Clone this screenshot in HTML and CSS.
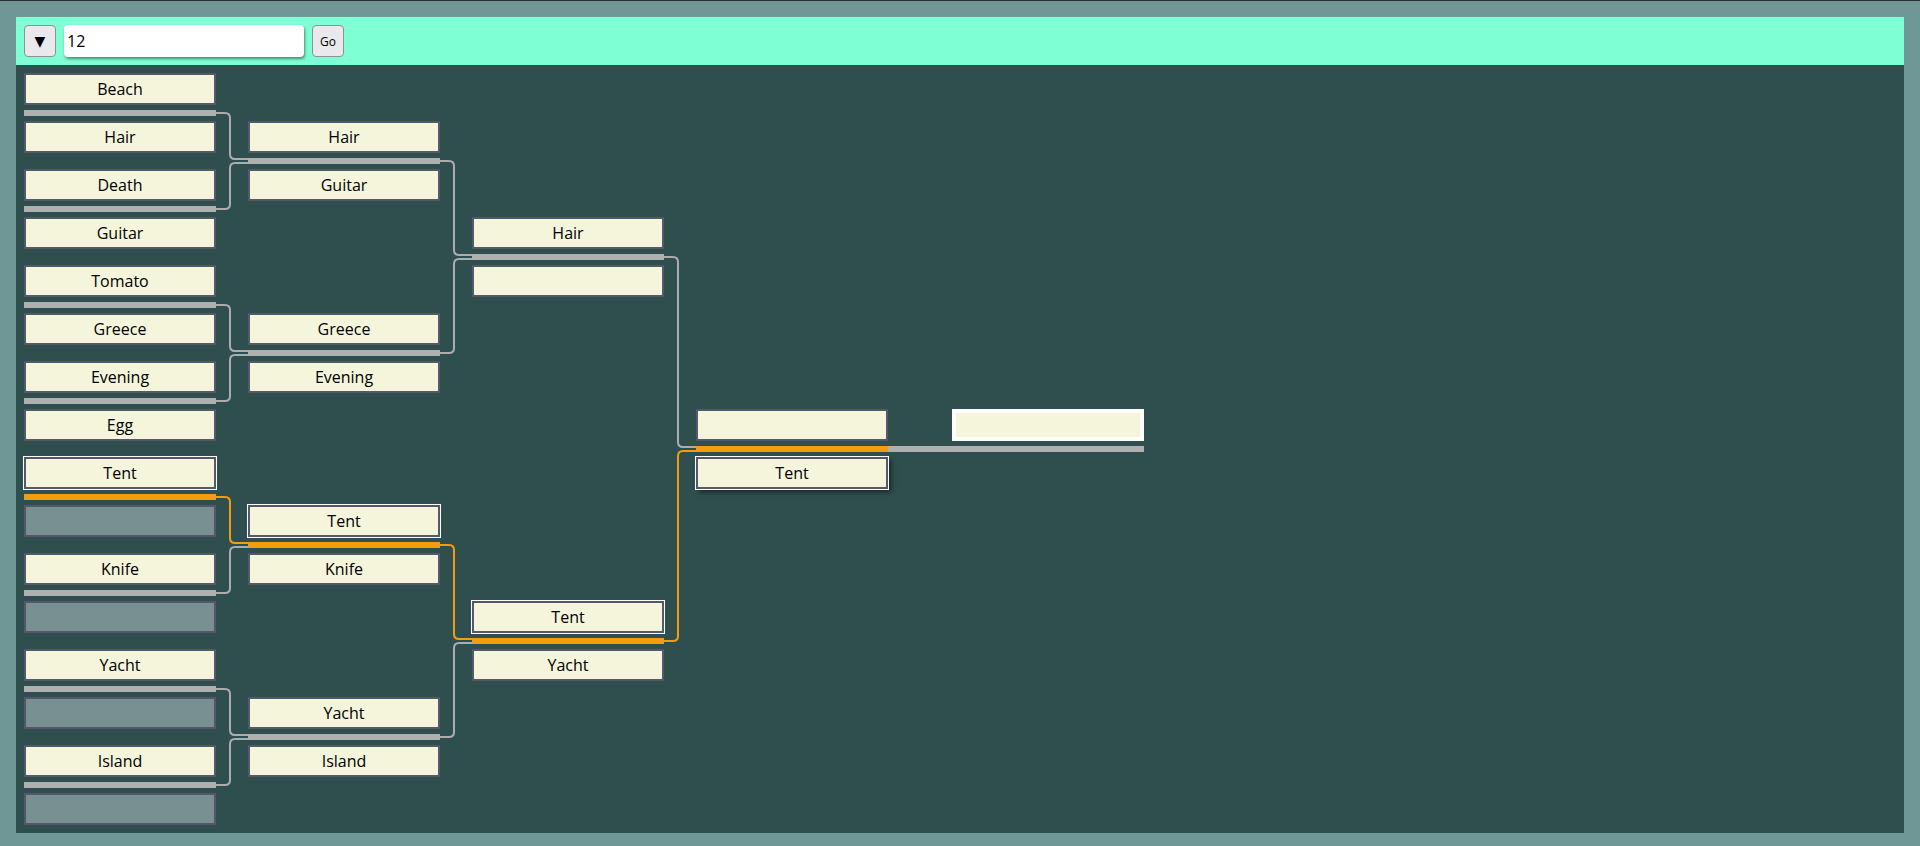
FILE: index.html
```html
<!DOCTYPE html>
<html>
<head>
<meta charset="utf-8">
<link rel="stylesheet" href="styles.css">
</head>
<body>
<div class="app">
  <div class="toolbar">
    <button class="btn dd">▼</button>
    <input class="count" type="text" value="12">
    <button class="btn go">Go</button>
  </div>
  <div class="bracket">
    <div class="col c1">
      <div class="match"><div class="slot">Beach</div><div class="bar"></div><div class="slot">Hair</div></div>
      <div class="match"><div class="slot">Death</div><div class="bar"></div><div class="slot">Guitar</div></div>
      <div class="match"><div class="slot">Tomato</div><div class="bar"></div><div class="slot">Greece</div></div>
      <div class="match"><div class="slot">Evening</div><div class="bar"></div><div class="slot">Egg</div></div>
      <div class="match"><div class="slot hl">Tent</div><div class="bar win"></div><div class="slot bye"></div></div>
      <div class="match"><div class="slot">Knife</div><div class="bar"></div><div class="slot bye"></div></div>
      <div class="match"><div class="slot">Yacht</div><div class="bar"></div><div class="slot bye"></div></div>
      <div class="match"><div class="slot">Island</div><div class="bar"></div><div class="slot bye"></div></div>
    </div>
    <div class="col c2">
      <div class="match"><div class="slot">Hair</div><div class="bar"></div><div class="slot">Guitar</div></div>
      <div class="match"><div class="slot">Greece</div><div class="bar"></div><div class="slot">Evening</div></div>
      <div class="match"><div class="slot hl">Tent</div><div class="bar win"></div><div class="slot">Knife</div></div>
      <div class="match"><div class="slot">Yacht</div><div class="bar"></div><div class="slot">Island</div></div>
    </div>
    <div class="col c3">
      <div class="match"><div class="slot">Hair</div><div class="bar"></div><div class="slot"></div></div>
      <div class="match"><div class="slot hl">Tent</div><div class="bar win"></div><div class="slot">Yacht</div></div>
    </div>
    <div class="col c4">
      <div class="match"><div class="slot"></div><div class="bar final"></div><div class="slot hl hover">Tent</div></div>
    </div>
    <div class="col c5">
      <div class="champion"></div>
    </div>
    <svg class="links" width="1888" height="768" viewBox="0 0 1888 768">
      <g fill="none" stroke="#adadad" stroke-width="2">
        <path d="M200 48 H209 Q214 48 214 53 V89 Q214 94 219 94 H232"/>
        <path d="M200 144 H209 Q214 144 214 139 V103 Q214 98 219 98 H232"/>
        <path d="M200 240 H209 Q214 240 214 245 V281 Q214 286 219 286 H232"/>
        <path d="M200 336 H209 Q214 336 214 331 V295 Q214 290 219 290 H232"/>
        <path d="M200 528 H209 Q214 528 214 523 V487 Q214 482 219 482 H232"/>
        <path d="M200 624 H209 Q214 624 214 629 V665 Q214 670 219 670 H232"/>
        <path d="M200 720 H209 Q214 720 214 715 V679 Q214 674 219 674 H232"/>
        <path d="M424 96 H433 Q438 96 438 101 V185 Q438 190 443 190 H456"/>
        <path d="M424 288 H433 Q438 288 438 283 V199 Q438 194 443 194 H456"/>
        <path d="M424 672 H433 Q438 672 438 667 V583 Q438 578 443 578 H456"/>
        <path d="M648 192 H657 Q662 192 662 197 V377 Q662 382 667 382 H680"/>
      </g>
      <g fill="none" stroke="#f39c12" stroke-width="2">
        <path d="M200 432 H209 Q214 432 214 437 V473 Q214 478 219 478 H232"/>
        <path d="M424 480 H433 Q438 480 438 485 V569 Q438 574 443 574 H456"/>
        <path d="M648 576 H657 Q662 576 662 571 V391 Q662 386 667 386 H680"/>
      </g>
    </svg>
  </div>
</div>
</body>
</html>
```

FILE: styles.css
```css
html, body {
  margin: 0;
  padding: 0;
}
body {
  background: #6f9795;
  border-top: 1px solid #2d2d2d;
  padding: 16px;
  font-family: "Open Sans", "Noto Sans", sans-serif;
  font-size: 16px;
  color: #000;
}
.app {
  display: flex;
  flex-direction: column;
}
.toolbar {
  background: #7fffd4;
  height: 48px;
  box-sizing: border-box;
  padding: 8px;
  display: flex;
  gap: 8px;
  align-items: center;
}
.btn {
  height: 32px;
  width: 32px;
  box-sizing: border-box;
  border: 1px solid #8f8f9d;
  border-radius: 4px;
  background: #e9e9ed;
  padding: 0;
  font-family: "Open Sans", sans-serif;
  color: #000;
}
.dd {
  font-size: 14px;
  font-family: "DejaVu Sans", sans-serif;
}
.go {
  font-size: 12px;
}
.count {
  width: 240px;
  height: 32px;
  box-sizing: border-box;
  border: none;
  border-radius: 4px;
  padding: 0 3px;
  font-family: "Open Sans", sans-serif;
  font-size: 16px;
  color: #000;
  background: #fff;
  box-shadow: 1px 2px 3px rgba(0, 0, 0, 0.45);
  outline: none;
}
.bracket {
  position: relative;
  background: #2f4f4f;
  padding: 8px;
  display: flex;
  gap: 32px;
  align-items: flex-start;
}
.col {
  width: 192px;
  display: flex;
  flex-direction: column;
}
.c1 { gap: 16px; }
.c2 { gap: 112px; padding-top: 48px; }
.c3 { gap: 304px; padding-top: 144px; }
.c4 { padding-top: 336px; }
.c5 { padding-top: 336px; margin-left: 32px; }
.match {
  display: flex;
  flex-direction: column;
  position: relative;
  z-index: 1;
}
.slot {
  height: 32px;
  box-sizing: border-box;
  border: 2px solid #55576a;
  background: #f5f5dc;
  text-align: center;
  line-height: 28px;
}
.slot.bye {
  background: #799090;
}
.slot.hl {
  outline: 1px solid #fff;
}
.slot.hover {
  box-shadow: 3px 3px 5px rgba(0, 0, 0, 0.55);
}
.bar {
  height: 6px;
  margin: 5px 0;
  background: #b0b0b0;
}
.bar.win {
  background: #f39c12;
}
.bar.final {
  width: 448px;
  background: linear-gradient(to right, #f39c12 0, #f39c12 192px, #b0b0b0 192px);
}
.champion {
  height: 32px;
  box-sizing: border-box;
  border: 4px solid #fff;
  background: #f5f5dc;
}
.links {
  position: absolute;
  left: 0;
  top: 0;
  pointer-events: none;
}
```
